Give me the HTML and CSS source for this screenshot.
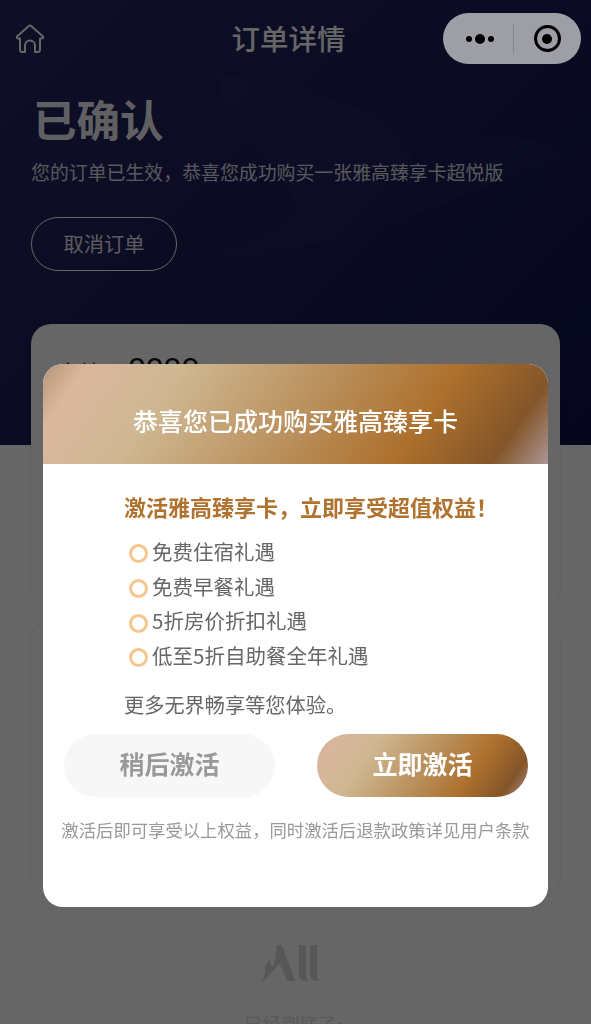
FILE: index.html
```html
<!DOCTYPE html>
<html lang="zh-CN">
<head>
<meta charset="utf-8">
<title>订单详情</title>
<link rel="stylesheet" href="styles.css">
</head>
<body>
<div class="page">
  <header class="hero">
    <svg class="wing" viewBox="0 0 591 445" aria-hidden="true"><path d="M215 72C290 90 345 100 377 117C395 130 405 145 415 162C445 145 480 136 510 136C530 138 550 146 566 155C515 175 465 195 415 215C350 240 280 252 207 260C240 250 275 235 294 215C295 200 290 185 279 170C255 150 225 115 215 72Z"/></svg>
    <nav class="nav">
      <svg class="home" viewBox="0 0 30 30" aria-hidden="true"><path d="M2.300 12.300 13.500 2.200a2.200 2.200 0 0 1 3 0L27.700 12.300c1 1 .5 2.200-.7 2.200H25V25.500a2.500 2.500 0 0 1-2.500 2.500H20V21.500a5 5 0 0 0-10 0V28H7.500A2.500 2.500 0 0 1 5 25.500V14.500H3c-1.200 0-1.700-1.200-.7-2.200Z"/></svg>
      <div class="nav-title">订单详情</div>
    </nav>
    <h1 class="status">已确认</h1>
    <p class="status-sub">您的订单已生效，恭喜您成功购买一张雅高臻享卡超悦版</p>
    <button class="cancel">取消订单</button>
  </header>
  <main class="content">
    <section class="card card-top">
      <div class="code-row"><span class="code-label">实付</span><span class="code-value">0000</span></div>
    </section>
    <section class="card card-second"></section>
    <footer class="end">
      <svg class="all-logo" viewBox="0 0 60 37" aria-hidden="true"><path d="M17 0 22 0 35 36 27 36C24 28 22 22 19 19 15 22 13 27 6 34L0 37C5 33 5 28 5 24 5 20 8 17 10 14 10 18 11 22 13 21 16 17 15 8 17 0Z"/><path d="M39 0h7v29c0 3 1 6 3 7h-4c-4-1-6-3-6-7ZM50 0h7v29c0 3 1 6 3 7h-4c-4-1-6-3-6-7Z"/></svg>
      <div class="end-text">已经到底了~</div>
    </footer>
  </main>
</div>

<div class="mask"></div>

<div class="capsule">
  <div class="capsule-half capsule-dots">
    <i class="dot"></i><i class="dot dot-big"></i><i class="dot"></i>
  </div>
  <div class="capsule-half capsule-target"><i class="target"></i></div>
</div>

<div class="modal">
  <div class="modal-head">恭喜您已成功购买雅高臻享卡</div>
  <div class="modal-body">
    <div class="modal-copy">
      <div class="lead">激活雅高臻享卡，立即享受超值权益！</div>
      <ul class="benefits">
        <li><i class="ring"></i>免费住宿礼遇</li>
        <li><i class="ring"></i>免费早餐礼遇</li>
        <li><i class="ring"></i>5折房价折扣礼遇</li>
        <li><i class="ring"></i>低至5折自助餐全年礼遇</li>
      </ul>
      <div class="more">更多无界畅享等您体验。</div>
    </div>
    <div class="actions">
      <button class="btn btn-later">稍后激活</button>
      <button class="btn btn-now">立即激活</button>
    </div>
    <p class="note">激活后即可享受以上权益，同时激活后退款政策详见用户条款</p>
  </div>
</div>
</body>
</html>
```
FILE: styles.css
```css
* { box-sizing: border-box; }
html, body { margin: 0; padding: 0; height: 1024px; overflow: hidden; }
body {
  font-family: "Noto Sans CJK SC", "Noto Sans", sans-serif;
  background: #fff;
  color: #333;
  position: relative;
}
.page { height: 1024px; overflow: hidden; }

.hero {
  position: relative;
  height: 445px;
  padding: 0 31px;
  background: linear-gradient(135deg, #25285f 0%, #1b1e58 50%, #0d1148 100%);
  color: #fff;
}
.wing { position: absolute; inset: 0; width: 591px; height: 445px; }
.wing path { fill: #fff; opacity: .02; }
.nav { position: relative; height: 77px; padding-right: 14px; display: flex; align-items: center; justify-content: center; }
.home {
  position: absolute; left: -16px; top: 24px; width: 30px; height: 30px;
  fill: none; stroke: #fff; stroke-width: 2; stroke-linecap: round; stroke-linejoin: round;
}
.nav-title { font-size: 28.500px; font-weight: 500; line-height: 40px; margin-top: -2px; }
.status { position: relative; margin: 13px 0 0 2px; font-size: 43.500px; line-height: 58px; font-weight: 700; color: rgba(255,255,255,.95); }
.status-sub { position: relative; margin: 10px 0 0; font-size: 18.900px; line-height: 28px; white-space: nowrap; font-weight: 400; color: rgba(255,255,255,.85); }
.cancel {
  position: relative; display: block; margin-top: 31px; width: 146px; height: 54px;
  border: 1px solid #fff; border-radius: 27px; background: transparent; color: rgba(255,255,255,.9);
  font: 400 20.300px/1 "Noto Sans CJK SC", sans-serif; padding: 0 0 2px;
}

.content { position: relative; margin-top: -121px; padding: 0 31px; height: 700px; }
.card { background: #fff; border-radius: 20px; box-shadow: 0 0 3px rgba(0,0,0,.1); }
.card-top { height: 285px; padding: 25px 27px 0; }
.card-second { height: 275px; margin-top: 13px; }
.code-row { display: flex; align-items: baseline; gap: 30px; }
.code-label { font-size: 20px; color: #333; line-height: 40px; }
.code-value { font-size: 32px; color: #111; line-height: 40px; font-family: "Liberation Sans", sans-serif; }
.end { display: flex; flex-direction: column; align-items: center; margin-top: 48px; }
.all-logo { width: 60px; height: 37px; fill: #d9d9d9; margin-right: 11px; }
.end-text { margin-top: 27px; font-size: 18.500px; line-height: 28px; color: #ddd; }

.mask { position: fixed; inset: 0; background: rgba(0,0,0,.6); }

.capsule {
  position: absolute; left: 443px; top: 13px; width: 138px; height: 51px; border-radius: 26px;
  background: #9e9ea7; display: flex; align-items: center;
}
.capsule-half { flex: 1; height: 100%; display: flex; align-items: center; justify-content: center; gap: 3px; }
.capsule-dots { position: relative; padding-left: 3px; }
.capsule-dots::after {
  content: ""; position: absolute; right: 0; top: 11px; width: 1px; height: 29px; background: #85858d;
}
.dot { width: 6px; height: 6px; border-radius: 50%; background: #000; }
.dot-big { width: 10px; height: 10px; }
.target {
  width: 27px; height: 27px; border-radius: 50%; border: 3px solid #000; position: relative;
  display: flex; align-items: center; justify-content: center;
}
.target::after { content: ""; width: 10px; height: 10px; border-radius: 50%; background: #000; }

.modal {
  position: absolute; left: 43px; top: 364px; width: 505px; height: 543px;
  border-radius: 20px; overflow: hidden; background: #fff;
  display: flex; flex-direction: column;
}
.modal-head {
  height: 100px; flex: none; padding-top: 38px;
  display: flex; justify-content: center; align-items: flex-start;
  color: #fff; font-size: 25px; line-height: 36px; font-weight: 500;
  background: linear-gradient(125deg, #b4957a 0%, #dbb79d 8%, #cfb893 24%, #b98f5b 52%, #ad702d 73%, #835529 90%, #ad9596 100%);
}
.modal-body { flex: 1; display: flex; flex-direction: column; }
.modal-copy { padding: 24px 0 0 81px; }
.lead { font-size: 22px; line-height: 36px; font-weight: 700; color: #b0722f; white-space: nowrap; }
.benefits { list-style: none; margin: 9.500px 0 0; padding: 0 0 0 4px; }
.benefits li {
  display: flex; align-items: center; gap: 5px; height: 34.700px;
  font-size: 20.500px; color: #666; white-space: nowrap;
}
.ring {
  display: block; width: 19px; height: 19px; border-radius: 50%; border: 3px solid #f6c68f; flex: none; position: relative; top: 3px; left: 0.5px;
}
.more { margin-top: 16.500px; font-size: 20.200px; line-height: 32px; color: #666; white-space: nowrap; }
.actions { display: flex; justify-content: space-between; padding: 0 20px 0 21px; margin-top: 13px; }
.btn {
  width: 211px; height: 63px; border: 0; border-radius: 32px; padding: 0 0 4px;
  font: 700 25px/1 "Noto Sans CJK SC", sans-serif;
}
.btn-later { background: #f7f7f7; color: #999; }
.btn-now {
  color: #fff;
  background: linear-gradient(125deg, #d6b098 0%, #d8b69d 10%, #cfb893 25%, #b98f5b 52%, #ad702d 72%, #835529 89%, #ad8f88 100%);
}
.note { margin: 19px 0 0; font-size: 17.350px; line-height: 28px; color: #999; text-align: center; white-space: nowrap; }
```
